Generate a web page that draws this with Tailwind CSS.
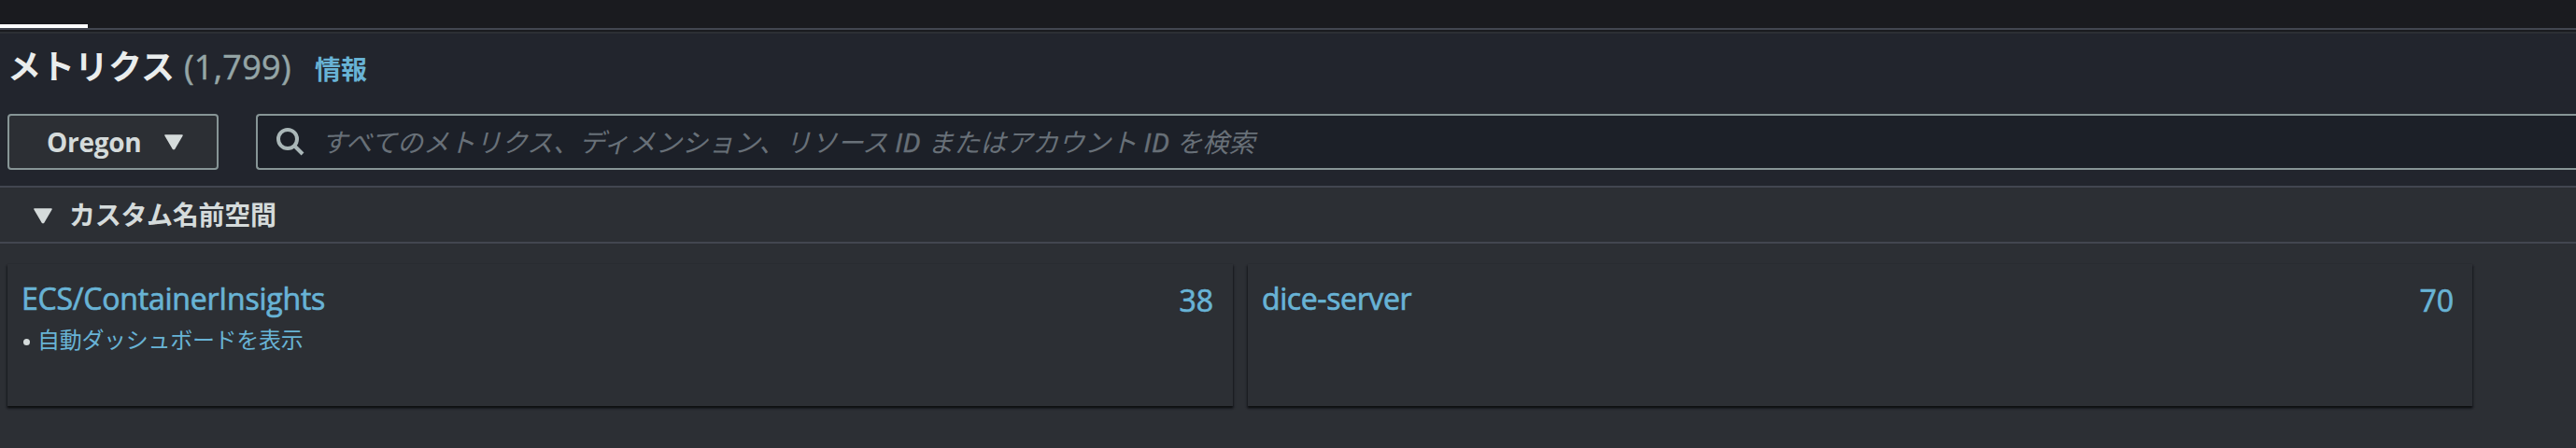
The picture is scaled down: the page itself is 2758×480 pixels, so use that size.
<!DOCTYPE html>
<html lang="ja"><head><meta charset="utf-8"><title>メトリクス</title>
<script src="https://cdn.jsdelivr.net/npm/@tailwindcss/browser@4"></script></head>
<body class="bg-[#2c2f34] h-[480px] overflow-hidden font-['Open_Sans','Noto_Sans_CJK_JP',sans-serif] text-[#d5dbdb]">
<div class="flex flex-col h-[480px] w-full">
  <nav class="h-8 shrink-0 border-b-2 border-[#424650] bg-[#1a1b1f] flex items-end"><div class="h-1 w-[94px] bg-white"></div></nav>
  <header class="h-[169px] shrink-0 border-t-2 border-t-[#1a1b1f] border-b-2 border-b-[#424650] bg-[#22252d]">
    <div class="h-0.5 bg-[#2c2f34]"></div>
    <div class="h-[86px] flex items-start pl-2 leading-[50px] whitespace-nowrap">
      <h1 class="text-[36px] font-bold text-[#eaeded] mt-[11px]">メトリクス</h1>
      <span class="text-[36px] text-[#95a5a6] mt-[11px] ml-[10px] tracking-[0.3px] [-webkit-text-stroke:0.5px]">(1,799)</span>
      <a class="text-[28px] font-bold text-[#68b3d5] mt-[13px] ml-[25px]">情報</a>
    </div>
    <div class="flex pl-2 gap-10">
      <button class="w-[226px] h-[60px] shrink-0 border-2 border-[#879596] rounded bg-[#2c2f34] flex items-center pl-10 text-[28px] font-bold"><span class="tracking-[-0.3px]">Oregon</span>
        <svg class="ml-[25px] w-5 h-[17px]" viewBox="0 0 20 17"><path d="M1 1H19L10.5 15.5H9.5Z" fill="#d5dbdb" stroke="#d5dbdb" stroke-width="1.5" stroke-linejoin="round"/></svg></button>
      <div class="flex-1 h-[60px] border-2 border-r-0 border-[#879596] rounded-l bg-[#1c2028] flex items-center pl-5 whitespace-nowrap">
        <svg class="w-[30px] h-[30px] shrink-0" viewBox="0 0 30 30" fill="none" stroke="#aab7b8" stroke-width="4"><circle cx="12" cy="12" r="10"/><path d="M19 19L28 28"/></svg>
        <span class="ml-[18px] text-[28px] italic text-[#687078]">すべてのメトリクス、ディメンション、リソース <span class="tracking-[0.7px] [-webkit-text-stroke:0.6px]">ID</span> またはアカウント <span class="tracking-[0.7px] [-webkit-text-stroke:0.6px]">ID</span> を検索</span>
      </div>
    </div>
  </header>
  <section class="h-[60px] shrink-0 border-b-2 border-[#424650] flex items-center pl-9">
    <svg class="w-5 h-[17px] mt-0.5" viewBox="0 0 20 17"><path d="M1 1H19L10.5 15.5H9.5Z" fill="#d5dbdb" stroke="#d5dbdb" stroke-width="1.5" stroke-linejoin="round"/></svg>
    <h2 class="ml-[18px] text-[28px] font-bold tracking-[-0.3px]">カスタム名前空間</h2>
  </section>
  <main class="flex-1 pt-[22px] pl-2 flex gap-4 text-[#68b3d5] text-[32px] leading-[44px] items-start">
    <article class="w-[1312px] h-[152px] shrink-0 bg-[#2c2f34] shadow-[0_2px_2px_#0e0f11,1px_2px_2px_#16191f80,-1px_2px_2px_#16191f80] px-[15px] pt-[15px] flex justify-between">
      <div><a class="tracking-[-0.22px] [-webkit-text-stroke:0.7px]">ECS/ContainerInsights</a>
        <div class="flex items-center text-[24px] leading-[36px] mt-1"><i class="w-[7px] h-[7px] rounded-full bg-[#d5dbdb] ml-[2px] mr-[8px] mt-1"></i><a class="tracking-[-0.3px]">自動ダッシュボードを表示</a></div></div>
      <span class="mt-[2px] mr-[6px] [-webkit-text-stroke:0.7px]">38</span>
    </article>
    <article class="w-[1311px] h-[152px] shrink-0 bg-[#2c2f34] shadow-[0_2px_2px_#0e0f11,1px_2px_2px_#16191f80,-1px_2px_2px_#16191f80] px-[15px] pt-[15px] flex justify-between">
      <a class="tracking-[-0.4px] [-webkit-text-stroke:0.7px]">dice-server</a><span class="mt-[2px] mr-[5px] [-webkit-text-stroke:0.7px]">70</span>
    </article>
  </main>
</div>
</body></html>
